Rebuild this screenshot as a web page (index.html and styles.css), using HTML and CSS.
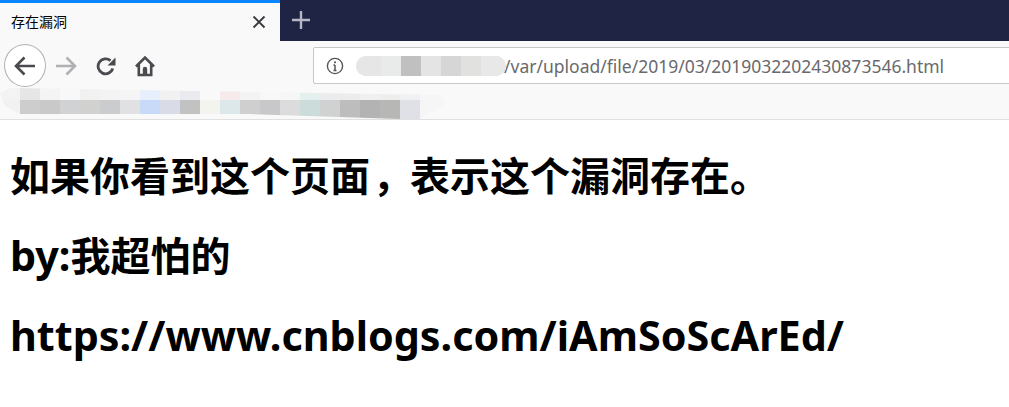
FILE: index.html
```html
<!DOCTYPE html>
<html lang="zh">
<head>
<meta charset="utf-8">
<title>存在漏洞</title>
<link rel="stylesheet" href="styles.css">
</head>
<body>
<div class="tabstrip">
  <div class="tab">
    <span class="tab-title">存在漏洞</span>
    <svg class="tab-close" width="14" height="14" viewBox="0 0 14 14"><path d="M1.500 1.500l11 11M12.500 1.500l-11 11" stroke="#38383d" stroke-width="1.800" fill="none"/></svg>
  </div>
  <svg class="newtab" width="20" height="20" viewBox="0 0 20 20"><path d="M10 1v18M1 10h18" stroke="#b6b7c4" stroke-width="2.400" fill="none"/></svg>
</div>
<div class="navbar">
  <div class="back">
    <svg width="24" height="24" viewBox="0 0 24 24"><path d="M22 12H3M11.500 3.500L3 12l8.500 8.500" stroke="#4a4a4f" stroke-width="2.600" fill="none"/></svg>
  </div>
  <svg class="forward" width="22" height="22" viewBox="0 0 22 22"><path d="M1 11h18M11.500 2.500l8.500 8.500-8.500 8.500" stroke="#b1b1b3" stroke-width="2.600" fill="none"/></svg>
  <svg class="reload" width="20" height="20" viewBox="0 0 20 20"><path d="M16.800 12.500A7.500 7.500 0 1 1 14.500 4.600" stroke="#4a4a4f" stroke-width="2.800" fill="none"/><path d="M19.500 1.500v8h-8z" fill="#4a4a4f"/></svg>
  <svg class="home" width="20" height="22" viewBox="0 0 20 22"><path d="M1 11.500l9-9 9 9M3.800 9v11h12.400V9" stroke="#4a4a4f" stroke-width="2.600" fill="none"/><path d="M7.800 20v-6a2.200 2.200 0 0 1 4.400 0v6z" fill="#4a4a4f"/></svg>
  <div class="urlbar">
    <svg class="info" width="18" height="18" viewBox="0 0 18 18"><circle cx="9" cy="9" r="7.600" stroke="#55555a" stroke-width="1.400" fill="none"/><path d="M9 8v5.500M7.500 13.500h3M7.500 8H9" stroke="#55555a" stroke-width="1.500" fill="none"/><circle cx="9" cy="5.300" r="1.100" fill="#55555a"/></svg>
    <div class="url-mask">
      <i class="u1"></i><i class="u2"></i><i class="u3"></i><i class="u4"></i><i class="u5"></i><i class="u6"></i><i class="u7"></i>
    </div>
    <span class="url">/var/upload/file/2019/03/2019032202430873546.html</span>
  </div>
</div>
<div class="bookmarks">
  <div class="smear">
    <div class="cells top">
      <i style="background:#f3f3f3"></i><i style="background:#e6e6e6"></i><i style="background:#f4f4f4"></i><i style="background:#f8f8f8"></i><i style="background:#f1f1f1"></i><i style="background:#f3f3f3"></i><i style="background:#f5f5f5"></i><i style="background:#e8effc"></i><i style="background:#f1f1f1"></i><i style="background:#eaebee"></i><i style="background:#f9f9f9"></i><i style="background:#f6eaea"></i><i style="background:#f3f3f3"></i><i style="background:#f8f8f8"></i><i style="background:#f6f6f6"></i><i style="background:#e4efee"></i><i style="background:#ebecee"></i><i style="background:#ececec"></i><i style="background:#f0f0f0"></i><i style="background:#eeeeee"></i><i style="background:#f0f1f3"></i>
    </div>
    <div class="cells bottom">
      <i style="background:#f1f1f1"></i><i style="background:#cdcdcd"></i><i style="background:#c9c9c9"></i><i style="background:#d1d2d3"></i><i style="background:#d1d1cf"></i><i style="background:#cbcccd"></i><i style="background:#e1e1e3"></i><i style="background:#c8daf7"></i><i style="background:#d9dce6"></i><i style="background:#c2c2c2"></i><i style="background:#f4f4ef"></i><i style="background:#dce8e9"></i><i style="background:#cfcfcf"></i><i style="background:#c8c8ca"></i><i style="background:#dcdcdc"></i><i style="background:#cbdcda"></i><i style="background:#d0d2d1"></i><i style="background:#bdbdbd"></i><i style="background:#b3b3b3"></i><i style="background:#b7b7b5"></i><i style="background:#e0e1e6"></i>
    </div>
  </div>
</div>
<main class="page">
  <h1>如果你看到这个页面<span class="comma">，</span>表示这个漏洞存在。</h1>
  <h1><span class="latin">by:</span>我超怕的</h1>
  <h1><span class="latin">https://www.cnblogs.com/iAmSoScArEd/</span></h1>
</main>
</body>
</html>
```
FILE: styles.css
```css
* { box-sizing: border-box; }
html, body { margin: 0; padding: 0; height: 100%; overflow: hidden; background: #fff; }
body { font-family: "Noto Sans", "Noto Sans CJK SC", sans-serif; }
i { display: block; }

.tabstrip { height: 41px; background: #1f2344; display: flex; align-items: center; }
.tab {
  width: 280px; height: 41px; background: #f9f9fa; border-top: 3px solid #0a84ff;
  display: flex; align-items: center; justify-content: space-between;
  padding: 0 14px 2px 11px;
}
.tab-title { font-size: 14px; color: #000; font-family: "Noto Sans CJK SC", sans-serif; }
.tab-close { margin-top: 2px; }
.newtab { margin: -1px 0 0 11px; }

.navbar { height: 47px; background: #f9f9fa; display: flex; align-items: center; padding: 2px 0 0 4px; }
.back {
  width: 42px; height: 43px; border-radius: 50%; border: 1px solid #b1b1b3; background: #fff;
  display: flex; align-items: center; justify-content: center; flex: none;
}
.forward { margin-left: 9px; flex: none; }
.reload { margin-left: 19px; flex: none; }
.home { margin-left: 19px; flex: none; }
.urlbar {
  margin-left: 158px; flex: none; width: 720px; height: 37px; background: #fff;
  border: 1px solid #c8c8c9; border-radius: 2px; display: flex; align-items: center; padding-left: 12px;
}
.info { flex: none; }
.url-mask {
  position: relative; z-index: 1; flex: none; margin-left: 12px; width: 150px; height: 20px;
  border-radius: 10px; display: flex; overflow: hidden; background: #e8e8e8; filter: blur(.5px);
}
.url-mask i { height: 100%; }
.u1 { width: 25px; background: #e6e6e6; }
.u2 { width: 20px; background: #e9ebea; }
.u3 { width: 20px; background: #c0c0c0; }
.u4 { width: 20px; background: #e4e4e4; }
.u5 { width: 20px; background: #d6d6d6; }
.u6 { width: 20px; background: #e1e1df; }
.u7 { width: 25px; background: #e8e8e8; }
.url { margin-left: -2px; font-size: 17.5px; color: #69696d; white-space: nowrap; }

.bookmarks { height: 32px; background: #f9f9fa; border-bottom: 1px solid #e0e0e1; overflow: hidden; }
.smear {
  width: 445px; height: 31px; filter: blur(.6px); background: #f6f6f7;
  clip-path: polygon(0 5px, 10px 0, 440px 7px, 445px 16px, 420px 31px, 400px 31px, 250px 26px, 20px 26px, 5px 18px);
}
.cells { display: flex; }
.cells i { width: 20px; height: 100%; flex: none; }
.top { height: 12px; }
.bottom { height: 19px; }

.page { padding: 0 10px; }
h1 { margin: 0 0 27px; font-size: 40px; line-height: 53px; font-weight: 700; color: #000; white-space: nowrap; }
h1:first-child { margin-top: 29px; }
.latin { font-size: 41.3px; }
.comma { display: inline-block; width: 40px; padding-left: 8px; font-feature-settings: "palt"; }
```
